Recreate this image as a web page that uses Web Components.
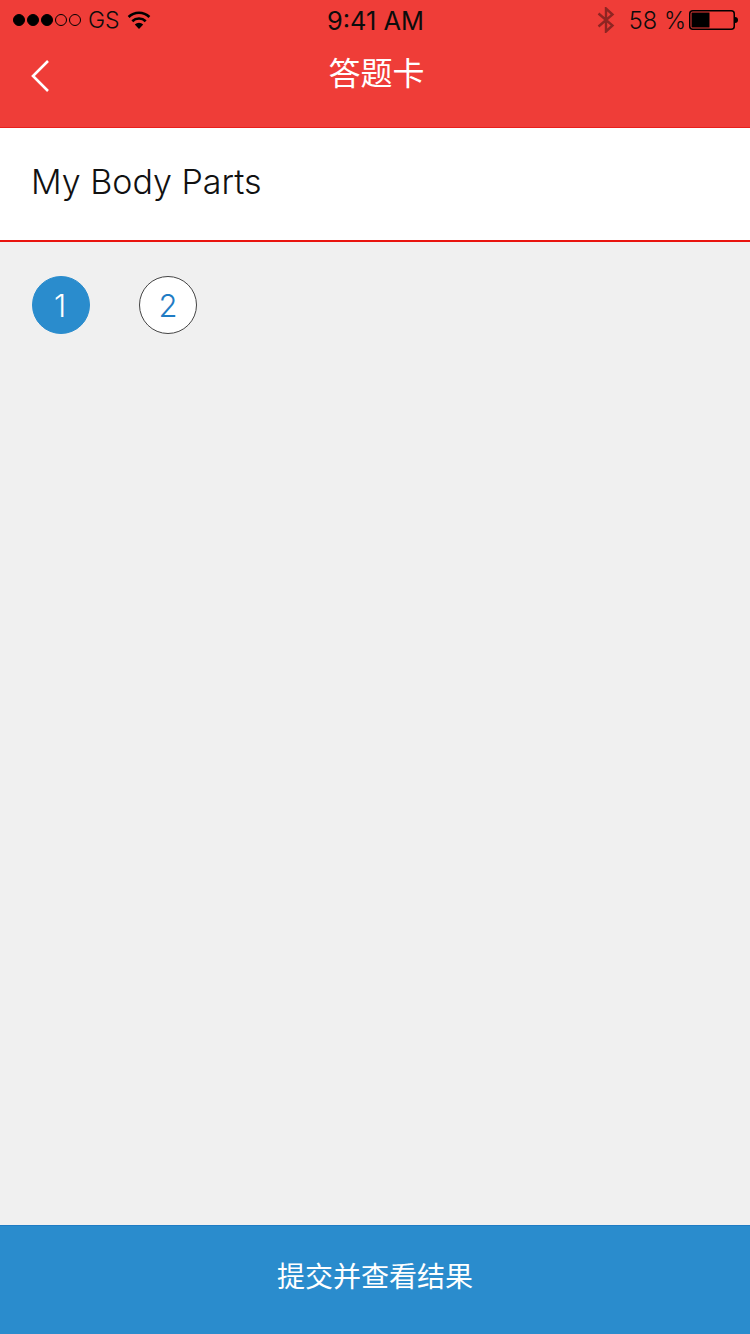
<!DOCTYPE html>
<html lang="zh">
<head>
<meta charset="utf-8">
<title>答题卡</title>
<style>
    html, body {
        margin: 0;
        padding: 0;
        height: 100%;
    }
    body {
        font-family: "Liberation Sans", "Noto Sans CJK SC", sans-serif;
    }
    answer-page {
        height: 1334px;
    }
</style>
</head>
<body>
<answer-page>
    <status-bar slot="top"></status-bar>
    <nav-header slot="top" title="答题卡"></nav-header>
    <paper-title slot="top">My Body Parts</paper-title>
    <answer-grid>
        <answer-dot active>1</answer-dot>
        <answer-dot>2</answer-dot>
    </answer-grid>
    <submit-bar slot="bottom">提交并查看结果</submit-bar>
</answer-page>
<script>
class AnswerPage extends HTMLElement {
    connectedCallback() {
        this.attachShadow({ mode: 'open' });
        this.shadowRoot.innerHTML = `
            <style>
                :host {
                    display: flex;
                    flex-direction: column;
                    background: #f0f0f0;
                }
                main {
                    flex: 1;
                }
            </style>
            <slot name="top"></slot>
            <main><slot></slot></main>
            <slot name="bottom"></slot>
        `;
    }
}

class StatusBar extends HTMLElement {
    connectedCallback() {
        this.attachShadow({ mode: 'open' });
        this.shadowRoot.innerHTML = `
            <style>
                :host {
                    display: grid;
                    grid-template-columns: 1fr auto 1fr;
                    align-items: center;
                    height: 40px;
                    padding: 0 12px 0 13px;
                    background: #ef3d38;
                    color: #0c0c0c;
                    font-family: "Inter", "Liberation Sans", sans-serif;
                    font-size: 23.6px;
                }
                .left, .right {
                    display: flex;
                    align-items: center;
                }
                .right {
                    justify-content: flex-end;
                }
                .dots {
                    display: flex;
                    gap: 2px;
                    margin-right: 7px;
                }
                .dots i {
                    width: 12px;
                    height: 12px;
                    box-sizing: border-box;
                    border-radius: 50%;
                    border: 1.5px solid #000;
                    background: #000;
                }
                .dots i.off {
                    background: none;
                }
                .carrier {
                    font-size: 23px;
                    font-weight: 300;
                    margin-right: 7px;
                }
                .time {
                    font-weight: 400;
                    font-size: 25.4px;
                }
                .percent {
                    font-weight: 300;
                    margin: 0 3px 0 14px;
                }
                svg {
                    display: block;
                }
            </style>
            <div class="left">
                <div class="dots"><i></i><i></i><i></i><i class="off"></i><i class="off"></i></div>
                <span class="carrier">GS</span>
                <svg width="24" height="18" viewBox="0 0 24 18">
                    <path d="M12 18 L7.8 13.4 A6 6 0 0 1 16.2 13.4 Z" fill="#000"/>
                    <path d="M5.3 10.2 A9.6 9.6 0 0 1 18.7 10.2" fill="none" stroke="#000" stroke-width="2.6"/>
                    <path d="M1.6 6 A15 15 0 0 1 22.4 6" fill="none" stroke="#000" stroke-width="2.6"/>
                </svg>
            </div>
            <div class="time">9:41 AM</div>
            <div class="right">
                <svg width="18" height="26" viewBox="0 0 18 26">
                    <path d="M1.5 6.5 L15.5 18.5 L9 24.5 V1.5 L15.5 7.5 L1.5 19.5" fill="none" stroke="#8e2522" stroke-width="2.4"/>
                </svg>
                <span class="percent">58 %</span>
                <svg width="49" height="20" viewBox="0 0 49 20">
                    <rect x="0.75" y="0.75" width="44.5" height="18.5" rx="3" fill="none" stroke="#000" stroke-width="1.5"/>
                    <rect x="2.5" y="2.5" width="18" height="15" fill="#000"/>
                    <path d="M46 7 A3 3 0 0 1 46 13 Z" fill="#000"/>
                </svg>
            </div>
        `;
    }
}

class NavHeader extends HTMLElement {
    connectedCallback() {
        this.attachShadow({ mode: 'open' });
        this.shadowRoot.innerHTML = `
            <style>
                :host {
                    display: grid;
                    grid-template-columns: 1fr auto 1fr;
                    align-items: center;
                    height: 88px;
                    padding: 0 30px 16px;
                    box-sizing: border-box;
                    background: #ef3d38;
                    border-bottom: 1px solid #e8201c;
                    color: #fff;
                }
                h1 {
                    margin: 0 0 9px 3px;
                    font-size: 32px;
                    font-weight: 400;
                    font-family: "Noto Sans CJK SC", sans-serif;
                    line-height: 44px;
                }
                svg {
                    display: block;
                }
            </style>
            <svg width="22" height="32" viewBox="0 0 22 32">
                <path d="M18 1 L3 16 L18 31" fill="none" stroke="#fff" stroke-width="2.6"/>
            </svg>
            <h1>${this.getAttribute('title')}</h1>
        `;
    }
}

class PaperTitle extends HTMLElement {
    connectedCallback() {
        this.attachShadow({ mode: 'open' });
        this.shadowRoot.innerHTML = `
            <style>
                :host {
                    display: flex;
                    align-items: center;
                    height: 114px;
                    box-sizing: border-box;
                    padding: 0 31px 6px;
                    background: #fff;
                    border-bottom: 2px solid #e9140f;
                    color: #111;
                    font-family: "Inter", "Liberation Sans", sans-serif;
                    font-size: 34px;
                    font-weight: 300;
                }
            </style>
            <slot></slot>
        `;
    }
}

class AnswerGrid extends HTMLElement {
    connectedCallback() {
        this.attachShadow({ mode: 'open' });
        this.shadowRoot.innerHTML = `
            <style>
                :host {
                    display: flex;
                    gap: 49px;
                    padding: 34px 32px;
                }
            </style>
            <slot></slot>
        `;
    }
}

class AnswerDot extends HTMLElement {
    connectedCallback() {
        this.attachShadow({ mode: 'open' });
        this.shadowRoot.innerHTML = `
            <style>
                :host {
                    display: flex;
                    align-items: center;
                    justify-content: center;
                    width: 58px;
                    height: 58px;
                    box-sizing: border-box;
                    border-radius: 50%;
                    border: 1px solid #444;
                    background: #fff;
                    color: #1f7cc4;
                    font-family: "Inter", "Liberation Sans", sans-serif;
                    font-size: 31px;
                    font-weight: 300;
                }
                :host([active]) {
                    border-color: #2a8ccd;
                    background: #2a8ccd;
                    color: #fff;
                    padding-right: 2px;
                }
            </style>
            <slot></slot>
        `;
    }
}

class SubmitBar extends HTMLElement {
    connectedCallback() {
        this.attachShadow({ mode: 'open' });
        this.shadowRoot.innerHTML = `
            <style>
                :host {
                    display: flex;
                    align-items: center;
                    justify-content: center;
                    height: 109px;
                    box-sizing: border-box;
                    padding-bottom: 10px;
                    background: #2a8ccd;
                    border-top: 1px solid #1f7cc4;
                    color: #fff;
                    font-family: "Noto Sans CJK SC", sans-serif;
                    font-size: 28px;
                }
            </style>
            <slot></slot>
        `;
    }
}

customElements.define('answer-page', AnswerPage);
customElements.define('status-bar', StatusBar);
customElements.define('nav-header', NavHeader);
customElements.define('paper-title', PaperTitle);
customElements.define('answer-grid', AnswerGrid);
customElements.define('answer-dot', AnswerDot);
customElements.define('submit-bar', SubmitBar);
</script>
</body>
</html>
